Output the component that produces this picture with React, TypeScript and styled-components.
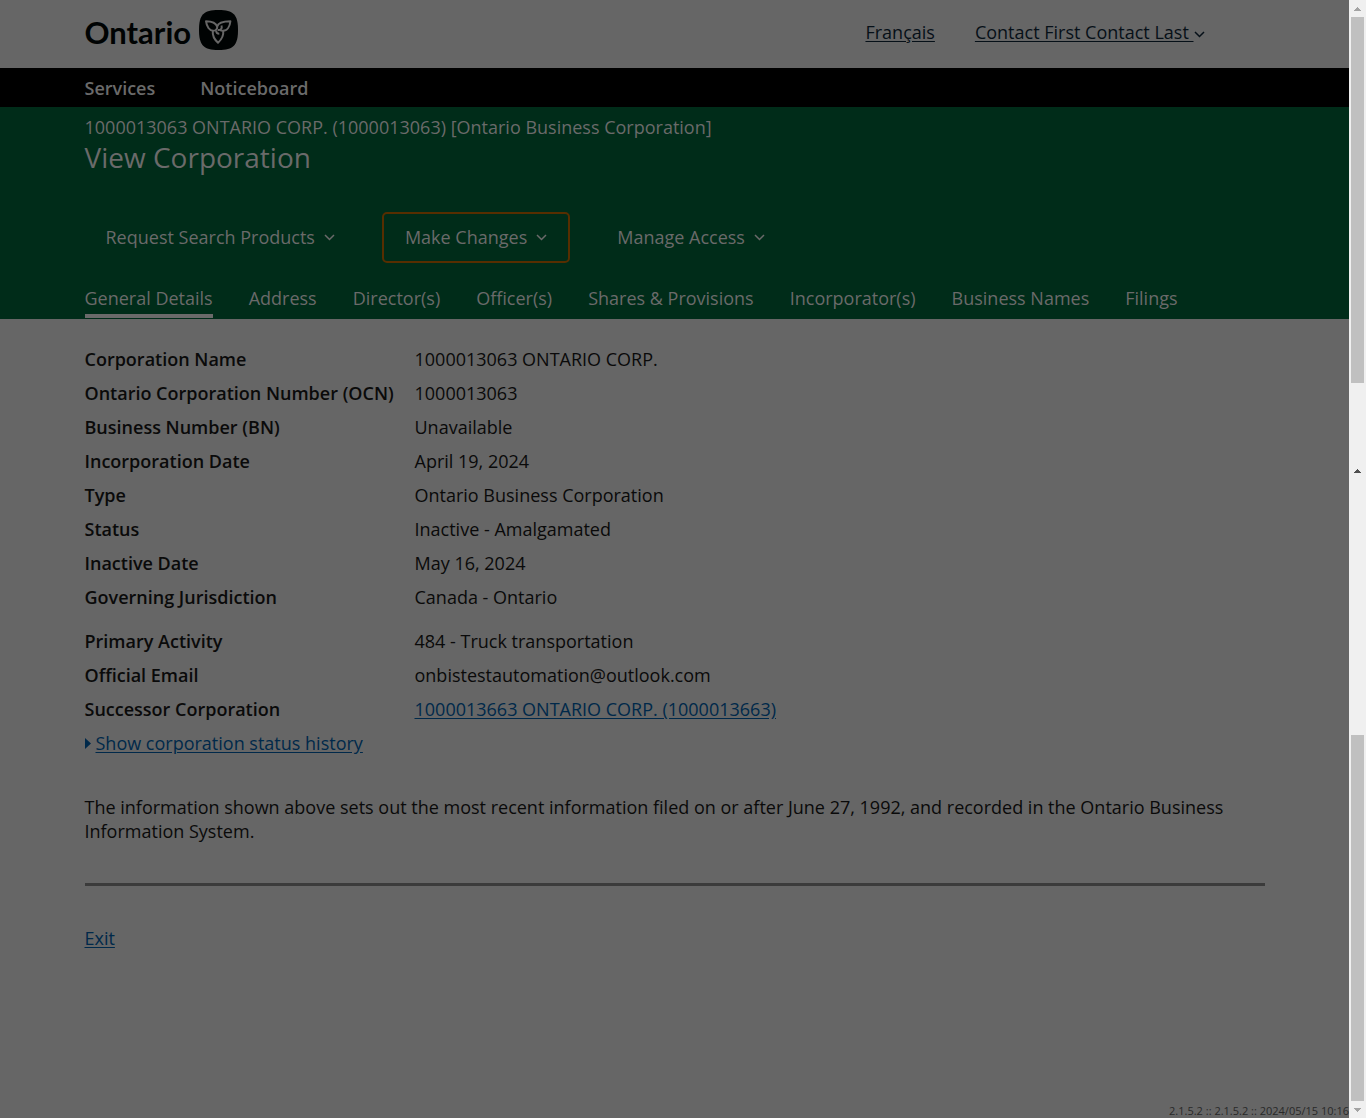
import React from "react";
import styled, { createGlobalStyle } from "styled-components";

const color = {
  page: "#666666",
  green: "#002c19",
  light: "#6a6a6a",
  ink: "#0a0a0a",
  link: "#00294a",
};

const GlobalStyle = createGlobalStyle`
  *, *::before, *::after { box-sizing: border-box; }
  body {
    margin: 0;
    background: ${color.page};
    color: ${color.ink};
    font-family: "Open Sans", "Noto Sans", sans-serif;
    font-size: 18px;
    line-height: 24px;
  }
`;

const Shell = styled.div`
  display: grid;
  grid-template-columns: minmax(0, 1fr) 17px;
  min-height: 100vh;
`;

const Page = styled.div`
  display: flex;
  flex-direction: column;
`;

const Container = styled.div`
  width: 100%;
  max-width: 1220px;
  margin: 0 auto;
  padding: 0 20px;
`;

const HeaderRow = styled(Container)`
  display: flex;
  align-items: flex-start;
  justify-content: space-between;
  min-height: 68px;
  padding-top: 10px;
  padding-right: 80px;
`;

const Brand = styled.a`
  display: flex;
  align-items: center;
  gap: 8px;
  color: #000303;
  font-family: Lato, "Open Sans", sans-serif;
  font-size: 31px;
  font-weight: 700;
  line-height: 44px;
  text-decoration: none;

  svg {
    align-self: flex-start;
  }
`;

const HeaderLinks = styled.div`
  display: flex;
  gap: 40px;
  padding-top: 10px;
`;

const HeaderLink = styled.a`
  color: #061018;
  text-decoration: underline;
  text-underline-offset: 2px;
`;

const MenuLink = styled.button`
  padding: 0;
  border: 0;
  background: none;
  color: #061018;
  font: inherit;
  text-decoration: underline;
  text-underline-offset: 2px;
  cursor: pointer;

  svg {
    vertical-align: middle;
  }
`;

const TopBar = styled.nav`
  background: #000000;
`;

const TopBarRow = styled(Container)`
  display: flex;
  gap: 45px;
  padding-top: 8px;
  padding-bottom: 7px;
`;

const TopBarLink = styled.a`
  color: ${color.light};
  font-weight: 600;
  text-decoration: none;
`;

const Banner = styled.section`
  background: ${color.green};
  color: ${color.light};
  padding: 8px 0 1px;
`;

const Entity = styled.p`
  margin: 0;
`;

const Title = styled.h1`
  margin: 0;
  font-size: 28px;
  font-weight: 400;
  line-height: 36px;
`;

const Actions = styled.div`
  display: flex;
  flex-wrap: wrap;
  gap: 24px;
  margin: 37px 0 0 -2px;
`;

const ActionButton = styled.button<{ $focused?: boolean }>`
  display: flex;
  align-items: center;
  gap: 9px;
  min-height: 51px;
  padding: 0 21px 2px;
  border: 2px solid ${(p) => (p.$focused ? "#572e00" : "transparent")};
  border-radius: 5px;
  background: none;
  color: ${color.light};
  font: inherit;
  cursor: pointer;

  svg {
    margin-top: 2px;
  }
`;

const Tabs = styled.nav`
  display: flex;
  flex-wrap: wrap;
  gap: 0 36px;
  margin-top: 23px;
`;

const Tab = styled.a<{ $active?: boolean }>`
  padding-bottom: 4px;
  border-bottom: 4px solid ${(p) => (p.$active ? color.light : "transparent")};
  color: ${color.light};
  text-decoration: none;
`;

const Content = styled.main`
  flex: 1;
  padding-top: 23px;
`;

const Details = styled.dl`
  margin: 0 0 10px;

  & + & {
    margin-bottom: 0;
  }
`;

const DetailRow = styled.div`
  display: grid;
  grid-template-columns: 330px minmax(0, 1fr);
  padding: 5px 0;
`;

const Term = styled.dt`
  font-weight: 600;
`;

const Value = styled.dd`
  margin: 0;
`;

const Link = styled.a`
  color: ${color.link};
  text-decoration: underline;
  text-underline-offset: 2px;
`;

const HistoryRow = styled.div`
  display: flex;
  align-items: center;
  gap: 5px;
  padding: 5px 0;
`;

const HistoryButton = styled.button`
  padding: 0;
  border: 0;
  background: none;
  color: ${color.link};
  font: inherit;
  text-decoration: underline;
  text-underline-offset: 2px;
  cursor: pointer;
`;

const Note = styled.p`
  margin: 35px 0 40px;
`;

const Rule = styled.hr`
  height: 3px;
  margin: 0 0 40px;
  border: 0;
  background: #3b3b3b;
`;

const Version = styled.footer`
  align-self: flex-end;
  color: #292929;
  font-size: 11px;
  line-height: 14px;
`;

const ScrollColumn = styled.div`
  display: grid;
  grid-template-rows: 383fr 735fr;
  background: #f0f0f0;
`;

const ScrollPart = styled.div`
  display: flex;
  flex-direction: column;
  align-items: center;
`;

const ArrowBox = styled.div`
  display: flex;
  align-items: center;
  justify-content: center;
  flex: 0 0 17px;
`;

const CenterArrow = styled(ArrowBox)`
  flex: 176 1 0;
`;

const SplitTrack = styled.div`
  flex: 176 1 0;
`;

const Thumb = styled.div`
  flex: 366 1 0;
  width: 13px;
  background: #c0c0c0;
`;

const Chevron = () => (
  <svg width="11" height="7" viewBox="0 0 11 7" fill="none" aria-hidden="true">
    <path d="M1 1 L5.5 5.5 L10 1" stroke="currentColor" strokeWidth="1.5" />
  </svg>
);

const ScrollArrow = ({ down, dark }: { down?: boolean; dark?: boolean }) => (
  <svg width="7" height="4" viewBox="0 0 7 4" aria-hidden="true" shapeRendering="crispEdges">
    <path d={down ? "M0 0H7L3.5 4Z" : "M0 4H7L3.5 0Z"} fill={dark ? "#505050" : "#a3a3a3"} />
  </svg>
);

const Trillium = () => (
  <svg width="39" height="40" viewBox="0 0 39 40" aria-hidden="true">
    <path d="M19.5 0C34.5 0 39 4.8 39 20S34.5 40 19.5 40 0 35.2 0 20 4.5 0 19.5 0Z" fill="#000303" />
    <g fill="none" stroke={color.page} strokeWidth="2" strokeLinejoin="round">
      <path d="M18.2 16.8C17 13 13.500 11.200 7 11.200C7.600 16.500 10.500 20.800 14.200 20.800C16.600 20.800 18.400 19 18.200 16.800Z" />
      <path d="M18.200 16.500C19 13 23.500 11.200 31.400 11.200C30.900 16.500 28.200 20.800 24 20.800C22.800 20.800 21.600 20.500 20.800 20" />
      <path d="M13.800 21C13.300 25.500 15.500 29.500 19 32.800C22.500 29.500 24.800 25.500 24.200 21" />
      <path d="M22.500 15.500C23.500 18.600 21.500 20.400 18.700 20M17 20.500C17.200 22.600 18.600 23.800 20.300 23.800" />
    </g>
  </svg>
);

const tabs = [
  "General Details",
  "Address",
  "Director(s)",
  "Officer(s)",
  "Shares & Provisions",
  "Incorporator(s)",
  "Business Names",
  "Filings",
];

const general: [string, string][] = [
  ["Corporation Name", "1000013063 ONTARIO CORP."],
  ["Ontario Corporation Number (OCN)", "1000013063"],
  ["Business Number (BN)", "Unavailable"],
  ["Incorporation Date", "April 19, 2024"],
  ["Type", "Ontario Business Corporation"],
  ["Status", "Inactive - Amalgamated"],
  ["Inactive Date", "May 16, 2024"],
  ["Governing Jurisdiction", "Canada - Ontario"],
];

const activity: [string, React.ReactNode][] = [
  ["Primary Activity", "484 - Truck transportation"],
  ["Official Email", "onbistestautomation@outlook.com"],
  ["Successor Corporation", <Link href="#successor">1000013663 ONTARIO CORP. (1000013663)</Link>],
];

const DetailList = ({ rows }: { rows: [string, React.ReactNode][] }) => (
  <Details>
    {rows.map(([term, value]) => (
      <DetailRow key={term}>
        <Term>{term}</Term>
        <Value>{value}</Value>
      </DetailRow>
    ))}
  </Details>
);

export default function App() {
  return (
    <>
      <GlobalStyle />
      <Shell>
        <Page>
          <header>
            <HeaderRow>
              <Brand href="#home">
                Ontario
                <Trillium />
              </Brand>
              <HeaderLinks>
                <HeaderLink href="#fr">Français</HeaderLink>
                <MenuLink type="button">
                  Contact First Contact Last <Chevron />
                </MenuLink>
              </HeaderLinks>
            </HeaderRow>
          </header>
          <TopBar>
            <TopBarRow>
              <TopBarLink href="#services">Services</TopBarLink>
              <TopBarLink href="#noticeboard">Noticeboard</TopBarLink>
            </TopBarRow>
          </TopBar>
          <Banner>
            <Container>
              <Entity>1000013063 ONTARIO CORP. (1000013063) [Ontario Business Corporation]</Entity>
              <Title>View Corporation</Title>
              <Actions>
                <ActionButton type="button">
                  Request Search Products <Chevron />
                </ActionButton>
                <ActionButton type="button" $focused>
                  Make Changes <Chevron />
                </ActionButton>
                <ActionButton type="button">
                  Manage Access <Chevron />
                </ActionButton>
              </Actions>
              <Tabs>
                {tabs.map((label, i) => (
                  <Tab key={label} href="#tab" $active={i === 0}>
                    {label}
                  </Tab>
                ))}
              </Tabs>
            </Container>
          </Banner>
          <Content>
            <Container>
              <DetailList rows={general} />
              <DetailList rows={activity} />
              <HistoryRow>
                <svg width="6" height="11" viewBox="0 0 6 11" aria-hidden="true">
                  <path d="M0 0L6 5.5L0 11Z" fill={color.link} />
                </svg>
                <HistoryButton type="button">Show corporation status history</HistoryButton>
              </HistoryRow>
              <Note>
                The information shown above sets out the most recent information filed on or after June 27, 1992, and
                recorded in the Ontario Business Information System.
              </Note>
              <Rule />
              <Link href="#exit">Exit</Link>
            </Container>
          </Content>
          <Version>2.1.5.2 :: 2.1.5.2 :: 2024/05/15 10:16</Version>
        </Page>
        <ScrollColumn aria-hidden="true">
          <ScrollPart>
            <ArrowBox>
              <ScrollArrow />
            </ArrowBox>
            <Thumb />
          </ScrollPart>
          <ScrollPart>
            <CenterArrow>
              <ScrollArrow dark />
            </CenterArrow>
            <SplitTrack />
            <Thumb />
            <ArrowBox>
              <ScrollArrow down />
            </ArrowBox>
          </ScrollPart>
        </ScrollColumn>
      </Shell>
    </>
  );
}
